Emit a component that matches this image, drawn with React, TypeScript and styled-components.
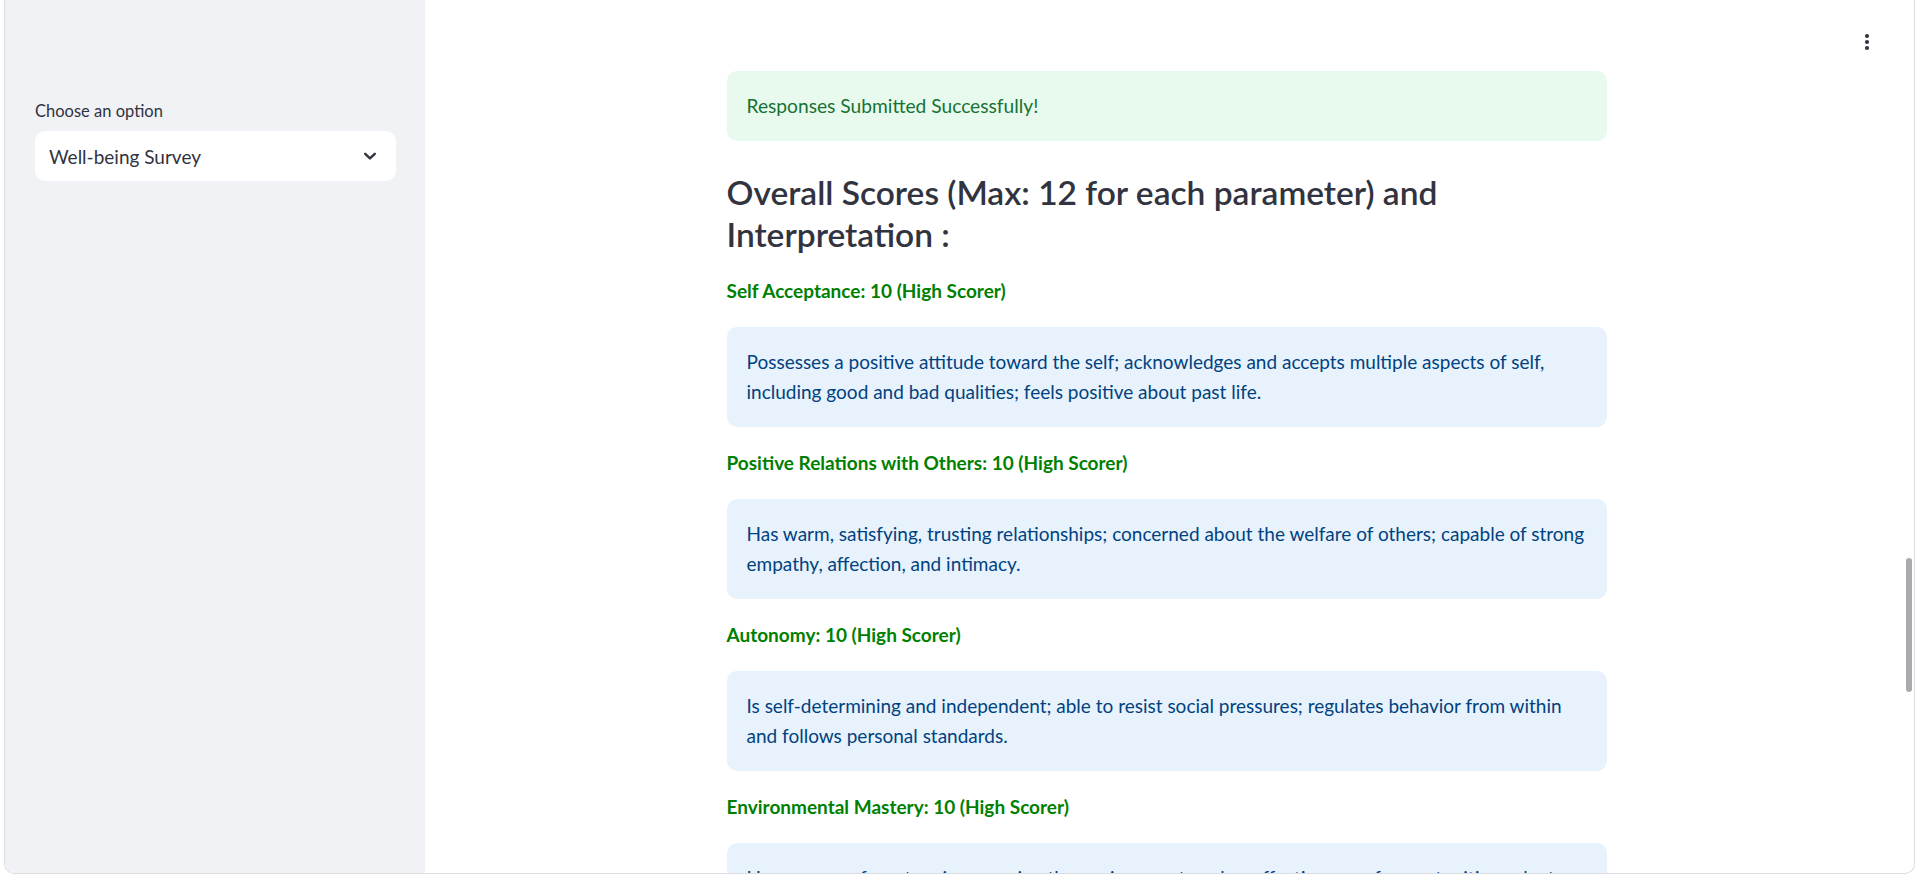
import React from "react";
import styled, { createGlobalStyle } from "styled-components";

const Global = createGlobalStyle`
  html, body { margin: 0; padding: 0; background: #ffffff; overflow: hidden; }
  body { font-family: Lato, "Noto Sans", sans-serif; color: #31333f; }
  * { box-sizing: border-box; }
`;

const Frame = styled.div`
  margin: 0 3px 0 4px;
  height: 874px;
  border: 1px solid #dcdde0;
  border-top: none;
  border-radius: 0 0 10px 10px;
  display: flex;
  overflow: hidden;
  background: #ffffff;
`;

const Sidebar = styled.aside`
  width: 420px;
  flex: none;
  background: #f0f2f6;
  padding: 97px 29px 0 30px;
  display: flex;
  flex-direction: column;
`;

const Label = styled.label`
  font-size: 16.5px;
  line-height: 28px;
  color: #31333f;
  margin-bottom: 6px;
`;

const Select = styled.div`
  height: 50px;
  background: #ffffff;
  border-radius: 10px;
  display: flex;
  align-items: center;
  justify-content: space-between;
  padding: 0 18px 0 14px;
  font-size: 19px;
  color: #31333f;
`;

const Main = styled.main`
  flex: 1;
  display: flex;
  justify-content: center;
  position: relative;
  min-width: 0;
  padding-left: 4px;
`;

const Menu = styled.button`
  position: absolute;
  top: 30px;
  right: 25px;
  width: 24px;
  height: 24px;
  border: none;
  background: transparent;
  padding: 0;
  display: flex;
  align-items: center;
  justify-content: center;
`;

const Column = styled.div`
  width: 880px;
  padding-top: 71px;
  display: flex;
  flex-direction: column;
  gap: 20px;
`;

const Alert = styled.div<{ $kind: "success" | "info" }>`
  border-radius: 10px;
  padding: ${(p) => (p.$kind === "success" ? "20px" : "20px 14px 20px 20px")};
  font-size: ${(p) => (p.$kind === "success" ? "19.2px" : "19px")};
  line-height: ${(p) => (p.$kind === "success" ? "30.4px" : "30px")};
  background: ${(p) => (p.$kind === "success" ? "#e8f9ee" : "#e8f2fc")};
  color: ${(p) => (p.$kind === "success" ? "#177233" : "#004280")};
`;

const Heading = styled.h3`
  margin: 0;
  padding-top: 10px;
  font-size: 33.5px;
  line-height: 42px;
  font-weight: 600;
  color: #31333f;
`;

const Score = styled.p`
  margin: 0;
  font-size: 19px;
  line-height: 32px;
  font-weight: 700;
  color: #008000;
`;

const Scroll = styled.div`
  width: 10px;
  flex: none;
  display: flex;
  flex-direction: column;
  align-items: center;
`;

const Thumb = styled.div`
  margin-top: 558px;
  width: 6px;
  height: 134px;
  border-radius: 3px;
  background: #a9a9ae;
`;

const Chevron = () => (
  <svg width="16" height="16" viewBox="0 0 16 16" fill="none">
    <path d="M3.2 5.8 L8 10.4 L12.8 5.8" stroke="#31333f" strokeWidth="2.4" strokeLinecap="round" strokeLinejoin="round" />
  </svg>
);

const Kebab = () => (
  <svg width="6" height="18" viewBox="0 0 6 18">
    <circle cx="3" cy="3" r="2.1" fill="#31333f" />
    <circle cx="3" cy="9" r="2.1" fill="#31333f" />
    <circle cx="3" cy="15" r="2.1" fill="#31333f" />
  </svg>
);

const scores = [
  {
    title: "Self Acceptance: 10 (High Scorer)",
    text: "Possesses a positive attitude toward the self; acknowledges and accepts multiple aspects of self, including good and bad qualities; feels positive about past life.",
  },
  {
    title: "Positive Relations with Others: 10 (High Scorer)",
    text: "Has warm, satisfying, trusting relationships; concerned about the welfare of others; capable of strong empathy, affection, and intimacy.",
  },
  {
    title: "Autonomy: 10 (High Scorer)",
    text: "Is self-determining and independent; able to resist social pressures; regulates behavior from within and follows personal standards.",
  },
  {
    title: "Environmental Mastery: 10 (High Scorer)",
    text: "Has a sense of mastery in managing the environment; makes effective use of opportunities; adapts and controls complex array of external activities.",
  },
];

export default function App() {
  return (
    <>
      <Global />
      <Frame>
        <Sidebar>
          <Label>Choose an option</Label>
          <Select>
            <span>Well-being Survey</span>
            <Chevron />
          </Select>
        </Sidebar>
        <Main>
          <Menu aria-label="menu">
            <Kebab />
          </Menu>
          <Column>
            <Alert $kind="success">Responses Submitted Successfully!</Alert>
            <Heading>Overall Scores (Max: 12 for each parameter) and Interpretation :</Heading>
            {scores.map((s) => (
              <React.Fragment key={s.title}>
                <Score>{s.title}</Score>
                <Alert $kind="info">{s.text}</Alert>
              </React.Fragment>
            ))}
          </Column>
        </Main>
        <Scroll>
          <Thumb />
        </Scroll>
      </Frame>
    </>
  );
}
